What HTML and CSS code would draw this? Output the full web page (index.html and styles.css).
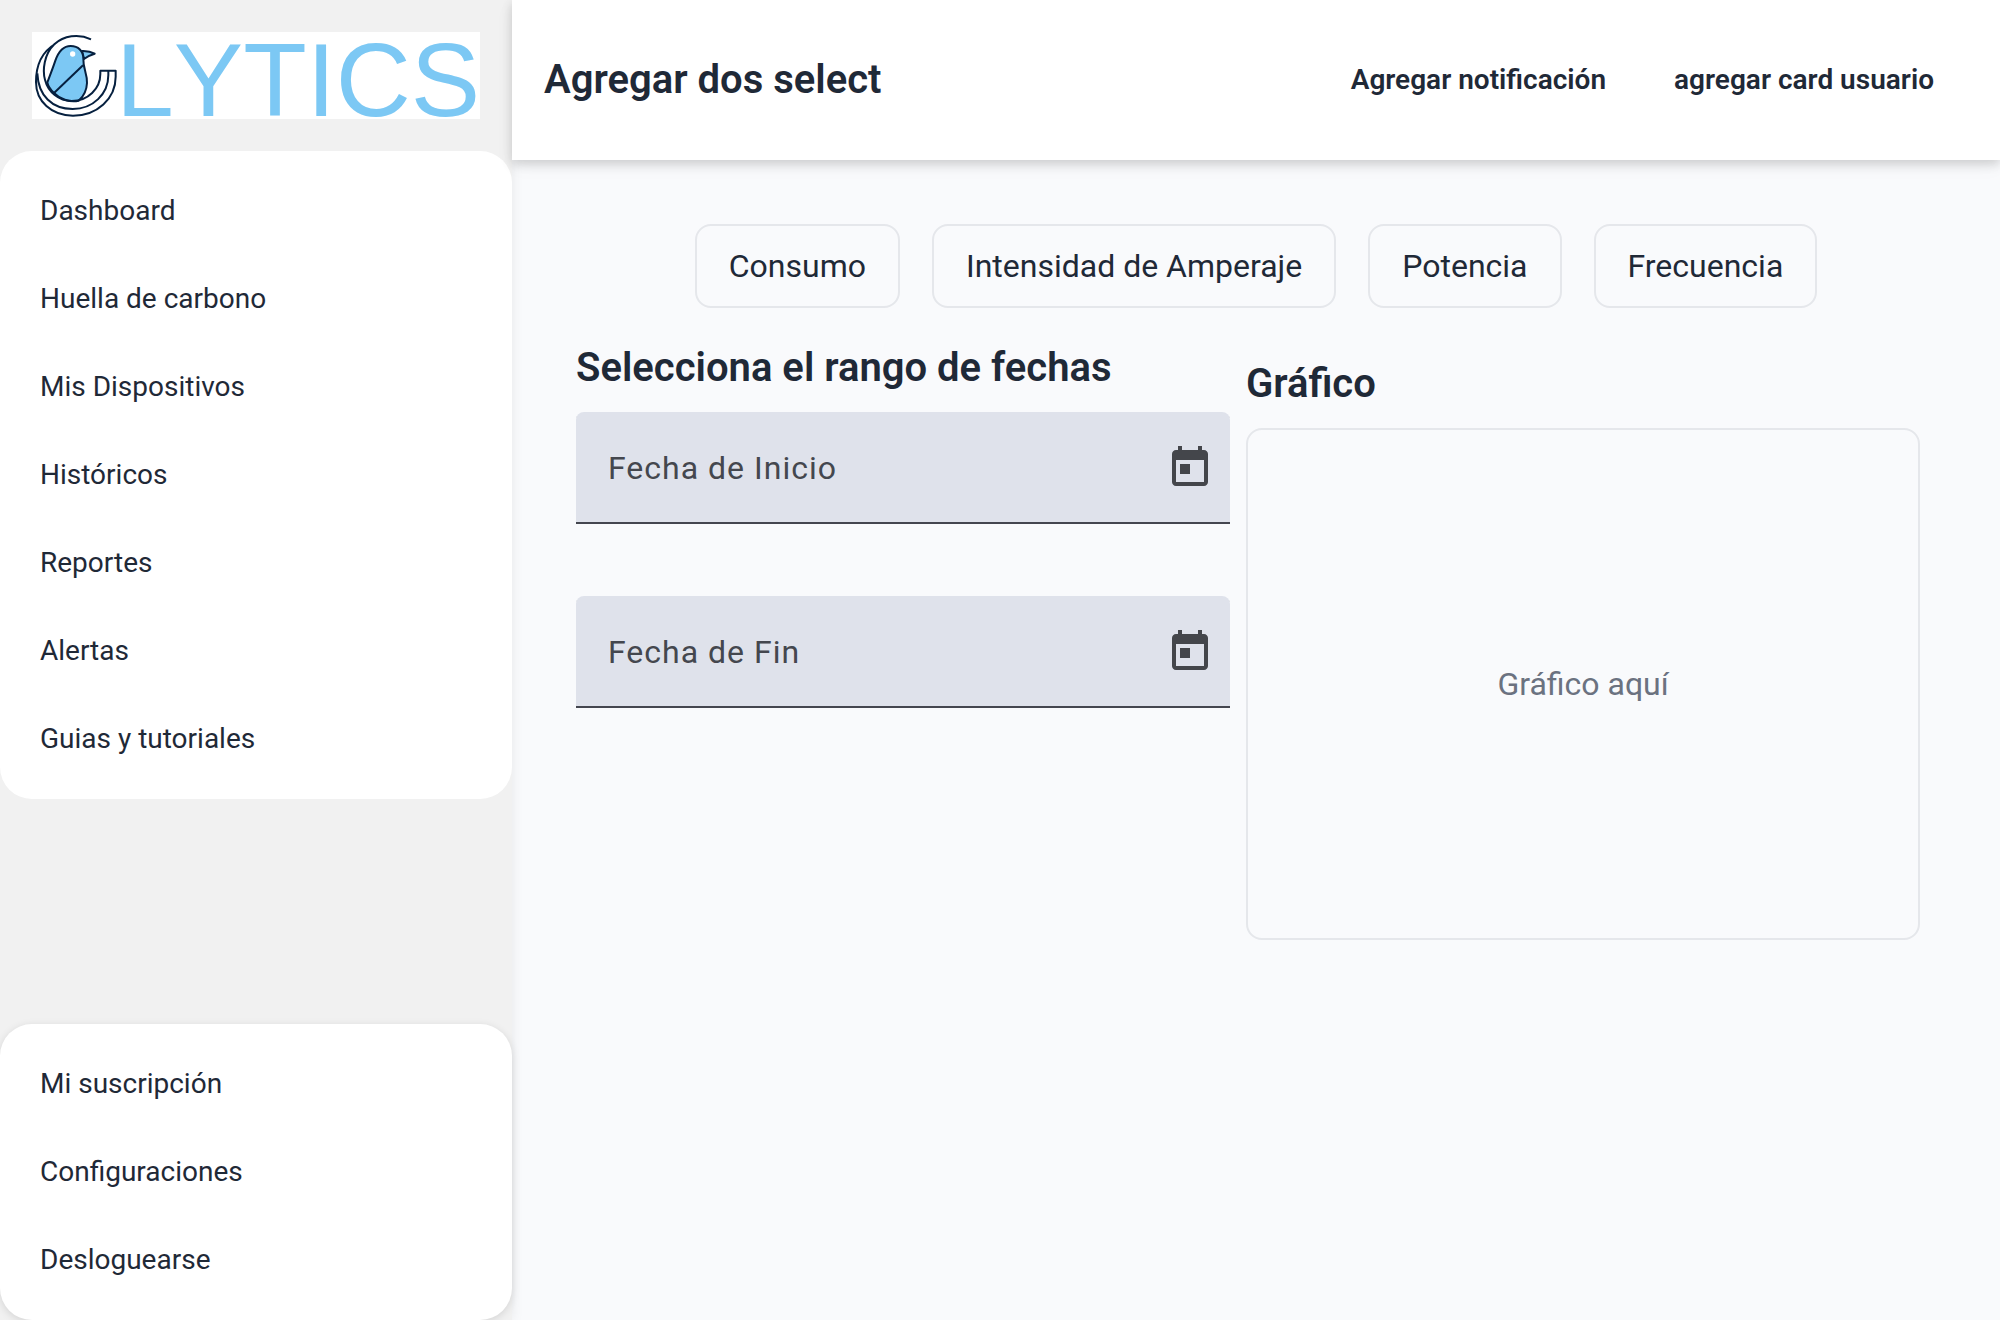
FILE: index.html
```html
<!DOCTYPE html>
<html lang="es">
<head>
<meta charset="utf-8">
<meta name="viewport" content="width=device-width, initial-scale=1">
<title>Lytics</title>
<link rel="stylesheet" href="styles.css">
</head>
<body>
<div class="app">
  <aside class="sidebar">
    <a class="brand" href="#">
      <svg class="brand-logo" viewBox="0 0 448 87" role="img" aria-label="Lytics">
        <g transform="scale(.33333) translate(-96 -96)" fill="none" stroke="#06203f" stroke-width="6" stroke-linejoin="round">
          <path d="M246 153Q268 152 284 161Q266 166 252 177Z" fill="#7cc8f4"/>
          <path d="M142 247C152 221 158 206 166 182C176 153 191 138 212 138C235 138 250 153 250 176C249 207 262 220 261 249C260 272 250 290 236 302C208 308 178 296 162 279C152 269 144 258 142 247Z" fill="#7cc8f4"/>
          <path d="M249 196L162 279"/>
          <circle cx="218" cy="162" r="8" fill="#fff" stroke="none"/>
          <path d="M273 118C235 100 191 107 163 133C132 163 127 211 135 239C144 276 177 303 215 303C264 303 301 266 301 222V212H347V230C347 296 291 347 219 347C154 347 108 304 108 246C108 195 127 155 165 132"/>
          <path d="M112 220C115 287 156 327 218 327C279 327 325 282 325 225V212"/>
        </g>
        <text class="brand-name" x="84" y="84">LYTICS</text>
      </svg>
    </a>
    <nav class="menu" aria-label="Principal">
      <a class="menu-item" href="#">Dashboard</a>
      <a class="menu-item" href="#">Huella de carbono</a>
      <a class="menu-item" href="#">Mis Dispositivos</a>
      <a class="menu-item" href="#">Históricos</a>
      <a class="menu-item" href="#">Reportes</a>
      <a class="menu-item" href="#">Alertas</a>
      <a class="menu-item" href="#">Guias y tutoriales</a>
    </nav>
    <nav class="menu menu-account" aria-label="Cuenta">
      <a class="menu-item" href="#">Mi suscripción</a>
      <a class="menu-item" href="#">Configuraciones</a>
      <a class="menu-item" href="#">Desloguearse</a>
    </nav>
  </aside>
  <header class="topbar">
    <h1 class="title">Agregar dos select</h1>
    <div class="topbar-actions">
      <span>Agregar notificación</span>
      <span>agregar card usuario</span>
    </div>
  </header>
  <main class="content">
    <div class="metrics">
      <button class="metric" type="button">Consumo</button>
      <button class="metric" type="button">Intensidad de Amperaje</button>
      <button class="metric" type="button">Potencia</button>
      <button class="metric" type="button">Frecuencia</button>
    </div>
    <div class="panels">
      <section class="dates">
        <h2 class="title">Selecciona el rango de fechas</h2>
        <div class="field">
          <label for="start">Fecha de Inicio</label>
          <input id="start" type="text">
          <button class="calendar" type="button" aria-label="Abrir calendario de inicio">
            <svg viewBox="0 0 24 24"><path d="M19 3h-1V1h-2v2H8V1H6v2H5c-1.110 0-2 .9-2 2v14c0 1.100.890 2 2 2h14c1.100 0 2-.9 2-2V5c0-1.100-.9-2-2-2zm0 16H5V8h14v11zM7 10h5v5H7z"/></svg>
          </button>
        </div>
        <div class="field">
          <label for="end">Fecha de Fin</label>
          <input id="end" type="text">
          <button class="calendar" type="button" aria-label="Abrir calendario de fin">
            <svg viewBox="0 0 24 24"><path d="M19 3h-1V1h-2v2H8V1H6v2H5c-1.110 0-2 .9-2 2v14c0 1.100.890 2 2 2h14c1.100 0 2-.9 2-2V5c0-1.100-.9-2-2-2zm0 16H5V8h14v11zM7 10h5v5H7z"/></svg>
          </button>
        </div>
      </section>
      <section class="chart">
        <h2 class="title">Gráfico</h2>
        <div class="chart-area">Gráfico aquí</div>
      </section>
    </div>
  </main>
</div>
</body>
</html>
```
FILE: styles.css
```css
* { box-sizing: border-box; }

body {
  margin: 0;
  font-family: Roboto, "Liberation Sans", sans-serif;
  color: #1f2937;
  background: #f9fafc;
}

button, input { font: inherit; color: inherit; }

.app {
  display: grid;
  grid-template-columns: 512px 1fr;
  grid-template-rows: auto 1fr;
  min-height: 100vh;
}

.sidebar {
  grid-row: 1 / 3;
  display: flex;
  flex-direction: column;
  background: #f1f1f1;
  box-shadow: 0 0 12px rgba(0, 0, 0, .08);
}

.brand {
  display: block;
  padding: 32px;
}

.brand-logo {
  display: block;
  width: 100%;
  overflow: visible;
  background: #fff;
}

.brand-name {
  font-family: "Liberation Sans", Arial, sans-serif;
  font-size: 104px;
  font-kerning: none;
  fill: #7cc8f4;
}

.menu {
  padding: 16px 0;
  border-radius: 32px;
  background: #fff;
}

.menu-account {
  margin-top: auto;
  box-shadow: 0 2px 8px rgba(0, 0, 0, .12);
}

.menu-item {
  display: block;
  padding: 24px 40px;
  font-size: 28px;
  line-height: 40px;
  color: inherit;
  text-decoration: none;
}

.menu-item:hover { text-decoration: underline; }

.topbar {
  display: flex;
  align-items: center;
  justify-content: space-between;
  height: 160px;
  padding: 0 66px 0 32px;
  background: #fff;
  box-shadow: 0 4px 10px rgba(0, 0, 0, .16), 0 6px 20px rgba(0, 0, 0, .04);
}

.title {
  margin: 0;
  font-size: 40px;
  line-height: 56px;
  font-weight: 600;
}

.topbar-actions {
  display: flex;
  gap: 68px;
  font-size: 28px;
  line-height: 40px;
  font-weight: 600;
}

.content { padding: 64px; }

.metrics {
  display: flex;
  flex-wrap: wrap;
  justify-content: center;
  gap: 32px;
}

.metric {
  padding: 16px 32px;
  border: 2px solid #e5e7eb;
  border-radius: 16px;
  background: transparent;
  font-size: 32px;
  line-height: 48px;
}

.panels {
  display: grid;
  grid-template-columns: 654fr 706fr;
  margin-top: 32px;
}

.dates .title { margin-bottom: 16px; }

.field {
  display: flex;
  align-items: center;
  height: 112px;
  margin-bottom: 72px;
  padding: 0 16px 0 32px;
  border-radius: 8px 8px 0 0;
  background: #dfe2eb;
  box-shadow: inset 0 -2px #44464f;
  color: #44474e;
  font-size: 32px;
  line-height: 48px;
  letter-spacing: 1px;
}

.field input {
  flex: 1;
  min-width: 0;
  border: 0;
  outline: 0;
  background: transparent;
}

.calendar {
  padding: 0;
  border: 0;
  background: none;
}

.calendar svg {
  display: block;
  width: 48px;
  height: 48px;
  fill: #44464b;
}

.chart { padding: 16px; }

.chart-area {
  display: flex;
  align-items: center;
  justify-content: center;
  height: 512px;
  margin-top: 16px;
  border: 2px solid #e5e7eb;
  border-radius: 16px;
  font-size: 32px;
  line-height: 48px;
  color: #6b7280;
}
```
